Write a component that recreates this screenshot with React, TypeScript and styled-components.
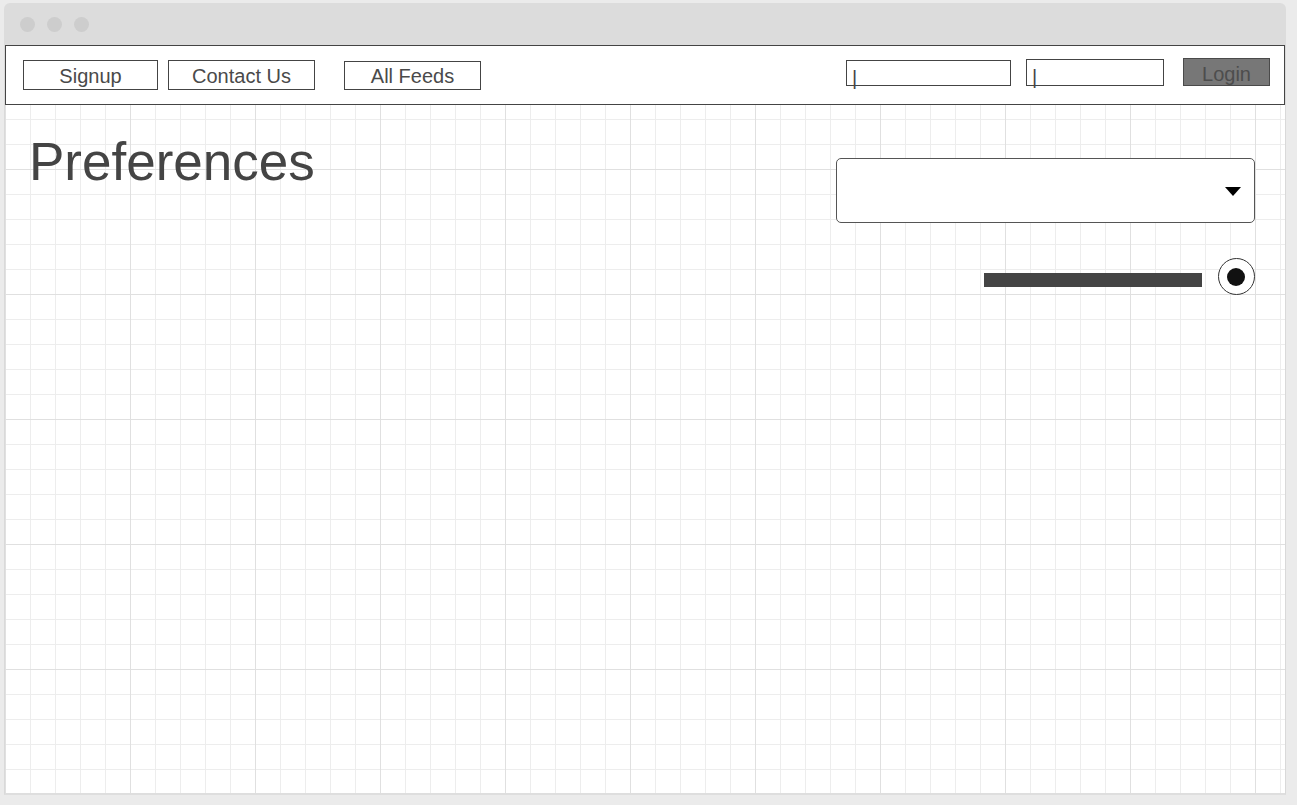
import React from 'react';
import styled, { createGlobalStyle } from 'styled-components';

const GlobalStyle = createGlobalStyle`
  html, body {
    margin: 0;
    padding: 0;
    background: #ebebeb;
    font-family: "Liberation Sans", Arial, sans-serif;
  }
  * {
    box-sizing: border-box;
  }
`;

const Window = styled.div`
  width: 1282px;
  height: 792px;
  margin: 3px 0 0 4px;
  display: flex;
  flex-direction: column;
`;

const TitleBar = styled.div`
  height: 42px;
  flex-shrink: 0;
  background: #dcdcdc;
  border-radius: 6px 6px 0 0;
  display: flex;
  align-items: center;
  gap: 12px;
  padding-left: 16px;
`;

const Dot = styled.span`
  width: 15px;
  height: 15px;
  border-radius: 50%;
  background: #cdcdcd;
`;

const Body = styled.div`
  flex: 1;
  display: flex;
  flex-direction: column;
  border-left: 1px solid #d9d9d9;
  border-right: 1px solid #d9d9d9;
  border-bottom: 2px solid #dedede;
  background-color: #ffffff;
  background-image:
    linear-gradient(to right, #e0e0e0 1px, transparent 1px),
    linear-gradient(to bottom, #e0e0e0 1px, transparent 1px),
    linear-gradient(to right, #ededed 1px, transparent 1px),
    linear-gradient(to bottom, #ededed 1px, transparent 1px);
  background-size: 125px 125px, 125px 125px, 25px 25px, 25px 25px;
  background-position: 0 0, 0 124px, 0 0, 0 24px;
`;

const NavBar = styled.nav`
  height: 60px;
  flex-shrink: 0;
  border: 1px solid #444;
  background: #fff;
  display: flex;
  align-items: center;
  padding: 0 14px 0 17px;
`;

const NavButton = styled.div<{ $width: number; $gap?: number; $height?: number }>`
  width: ${p => p.$width}px;
  height: ${p => p.$height ?? 30}px;
  margin-left: ${p => p.$gap ?? 0}px;
  margin-top: ${p => 30 - (p.$height ?? 30)}px;
  border: 1px solid #444;
  color: #4a4a4a;
  font-size: 20px;
  line-height: ${p => (p.$height ?? 30) - 2}px;
  padding-top: 1px;
  text-align: center;
  background: #fff;
`;

const RightGroup = styled.div`
  margin-left: auto;
  display: flex;
  align-items: flex-start;
  align-self: flex-start;
  margin-top: 12px;
`;

const TextInput = styled.div<{ $width: number; $height: number; $top: number; $gap?: number }>`
  width: ${p => p.$width}px;
  height: ${p => p.$height}px;
  margin-top: ${p => p.$top}px;
  margin-left: ${p => p.$gap ?? 0}px;
  border: 1px solid #444;
  background: #fff;
  padding-left: 5px;
  color: #444;
  font-size: 20px;
  line-height: 34px;
  overflow: visible;
  white-space: nowrap;
`;

const LoginButton = styled.div`
  width: 87px;
  height: 28px;
  margin-left: 19px;
  border: 1px solid #4a4a4a;
  background: #777777;
  color: #4d4d4d;
  font-size: 20px;
  line-height: 30px;
  text-align: center;
`;

const Content = styled.main`
  flex: 1;
  display: flex;
  justify-content: space-between;
  align-items: flex-start;
  padding: 0 30px 0 24px;
`;

const Heading = styled.h1`
  margin: 30px 0 0;
  font-size: 53px;
  font-weight: 400;
  line-height: 1;
  color: #444;
`;

const Controls = styled.div`
  margin-top: 53px;
  display: flex;
  flex-direction: column;
  align-items: flex-end;
`;

const Dropdown = styled.div`
  width: 419px;
  height: 65px;
  border: 1px solid #555;
  border-radius: 5px;
  background: #fff;
  display: flex;
  align-items: center;
  justify-content: flex-end;
  padding: 2px 13px 0 0;
`;

const Caret = styled.span`
  width: 0;
  height: 0;
  border-left: 8px solid transparent;
  border-right: 8px solid transparent;
  border-top: 9px solid #000;
`;

const SliderRow = styled.div`
  margin-top: 35px;
  display: flex;
  align-items: flex-start;
  gap: 16px;
`;

const Track = styled.div`
  width: 218px;
  height: 14px;
  margin-top: 15px;
  background: #444;
`;

const Knob = styled.div`
  width: 37px;
  height: 37px;
  border: 1px solid #333;
  border-radius: 50%;
  background: #fff;
  display: flex;
  align-items: center;
  justify-content: center;
  padding-right: 2px;
`;

const KnobDot = styled.span`
  width: 18px;
  height: 18px;
  border-radius: 50%;
  background: #111;
`;

export default function App() {
  return (
    <>
      <GlobalStyle />
      <Window>
        <TitleBar>
          <Dot />
          <Dot />
          <Dot />
        </TitleBar>
        <Body>
          <NavBar>
            <NavButton $width={135}>Signup</NavButton>
            <NavButton $width={147} $gap={10}>Contact Us</NavButton>
            <NavButton $width={137} $gap={29} $height={29}>All Feeds</NavButton>
            <RightGroup>
              <TextInput $width={165} $height={26} $top={2}>|</TextInput>
              <TextInput $width={138} $height={27} $top={1} $gap={15}>|</TextInput>
              <LoginButton>Login</LoginButton>
            </RightGroup>
          </NavBar>
          <Content>
            <Heading>Preferences</Heading>
            <Controls>
              <Dropdown>
                <Caret />
              </Dropdown>
              <SliderRow>
                <Track />
                <Knob>
                  <KnobDot />
                </Knob>
              </SliderRow>
            </Controls>
          </Content>
        </Body>
      </Window>
    </>
  );
}
